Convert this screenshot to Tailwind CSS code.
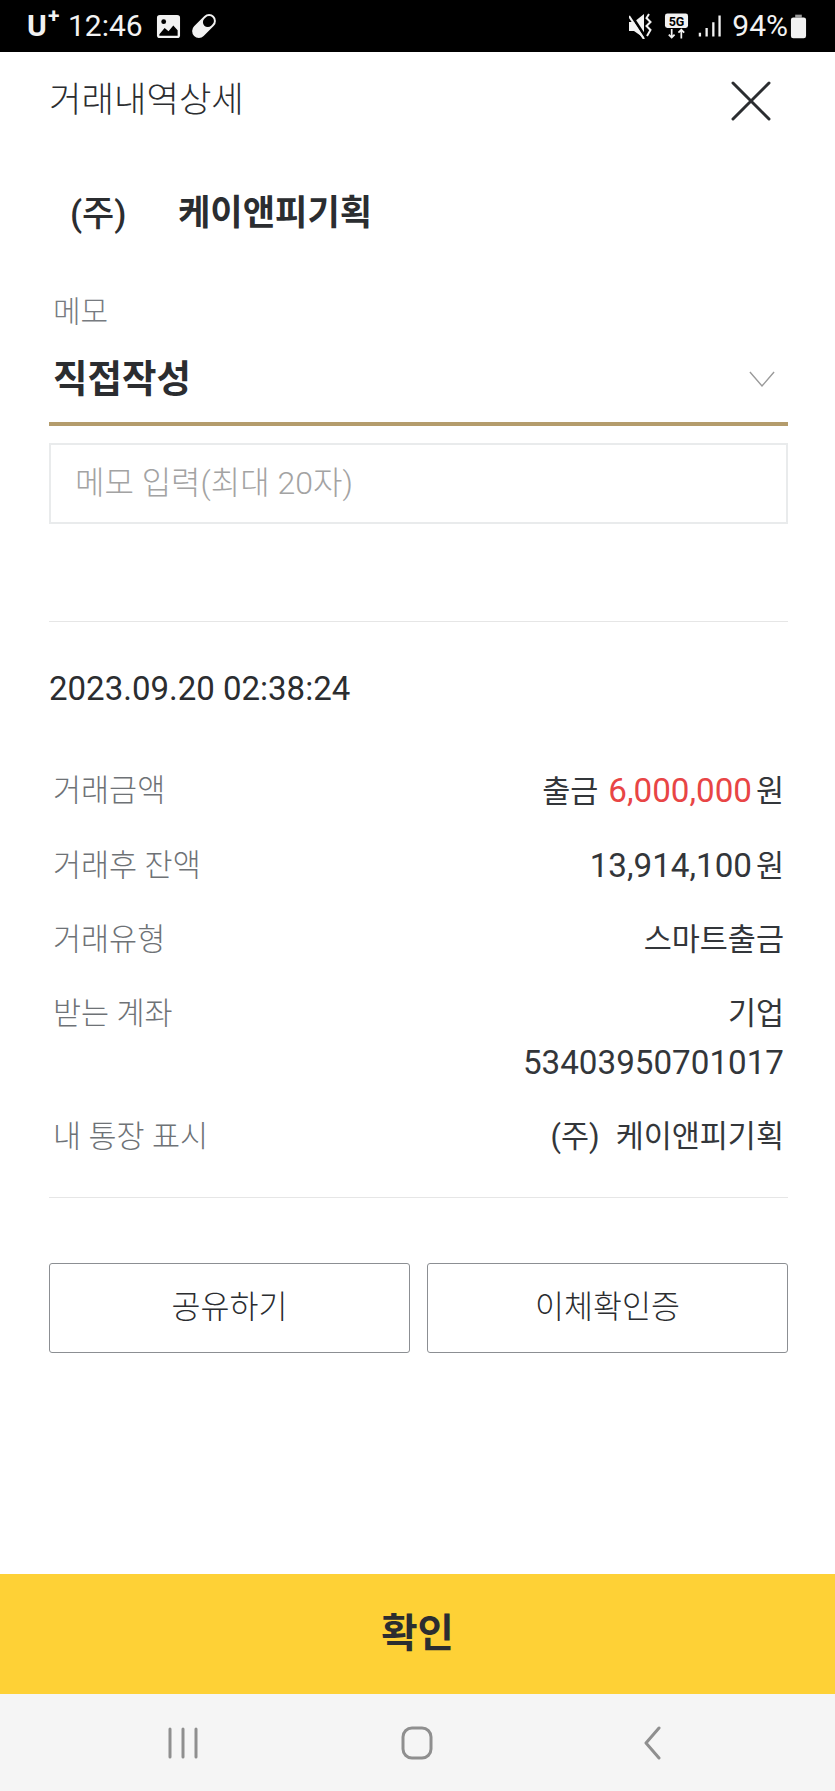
<!DOCTYPE html>
<html lang="ko">
<head>
<meta charset="utf-8">
<script src="https://cdn.jsdelivr.net/npm/@tailwindcss/browser@4"></script>
</head>
<body class="bg-white font-['Roboto','Noto_Sans_CJK_KR',sans-serif] text-[#2b2d30]">
<div class="w-[835px] h-[1791px] flex flex-col overflow-hidden">
  <div class="h-[52px] bg-black text-[#f2f2f2] flex items-center pl-[27px] pr-[27px] shrink-0">
    <span class="text-[30px] font-bold leading-none relative w-[31px]">U<span class="absolute left-[21px] -top-[5px] text-[21px]">+</span></span>
    <span class="ml-[10px] text-[30px] leading-none w-[76px]">12:46</span>
    <svg class="ml-[12px]" width="25" height="25" viewBox="0 0 26 26"><rect x="1" y="1" width="24" height="24" rx="3" fill="#f2f2f2"/><path d="M3.500 21 9 14.500l4 3.500 5-6 4.500 5V22.500H3.500z" fill="#000"/><circle cx="8" cy="8" r="2.500" fill="#000"/></svg>
    <svg class="ml-[9px]" width="28" height="28" viewBox="0 0 29 28"><g transform="rotate(-45 14.500 14)"><rect x="0" y="7" width="29" height="14" rx="7" fill="#f2f2f2"/><rect x="15" y="9" width="12" height="10" rx="5" fill="#000"/></g></svg>
    <div class="ml-auto flex items-center">
      <svg width="24" height="26" viewBox="0 0 24 26"><path d="M0 9h5l10-8v24L5 18H0z" fill="#f2f2f2"/><path d="M2 2 17 25" stroke="#000" stroke-width="3"/><path d="M0 3 15 26" stroke="#f2f2f2" stroke-width="2.200"/><path d="M20 1l-2.500 4 4 4-4 4 4 4-3.500 6" stroke="#f2f2f2" stroke-width="2" fill="none"/></svg>
      <svg class="ml-[11px]" width="25" height="28" viewBox="0 0 26 28"><rect x="1" y="1" width="24" height="15" rx="2.500" fill="#f2f2f2"/><text x="13" y="13.500" text-anchor="middle" font-family="Roboto" font-weight="700" font-size="13" fill="#000">5G</text><path d="M8 17v9m-3-3 3 3 3-3M18 27v-9m-3 3 3-3 3 3" stroke="#f2f2f2" stroke-width="1.800" fill="none"/></svg>
      <svg class="ml-[9px]" width="23" height="24" viewBox="0 0 24 24"><path d="M2 19v4M9 14v9M16 8v15M22.500 1v22" stroke="#f2f2f2" stroke-width="2.400"/></svg>
      <span class="ml-[11px] text-[30px] leading-none">94%</span>
      <svg class="ml-[2px] mr-[1px]" width="17" height="26" viewBox="0 0 18 26"><path d="M5.500 1h7v3h-7z" fill="#9a9a9a"/><rect x="1" y="4" width="16" height="22" rx="2.500" fill="#f2f2f2"/></svg>
    </div>
  </div>

  <div class="flex-1 flex flex-col pl-[49px] pr-[47px]">
    <div class="flex items-center justify-between h-[96px] pt-[2px] shrink-0">
      <h1 class="text-[35.3px] font-light leading-none">거래내역상세</h1>
      <svg class="mr-[17px]" width="40" height="40" viewBox="0 0 40 40"><path d="M2 2 38 38M38 2 2 38" stroke="#2b2d30" stroke-width="3" stroke-linecap="round"/></svg>
    </div>
    <div class="flex items-center pl-[21px] mt-[33px] h-[66px] shrink-0">
      <span class="text-[35px] font-medium leading-none w-[108px]">(주)</span>
      <span class="text-[35.2px] font-bold leading-none">케이앤피기획</span>
    </div>

    <div class="mt-[45px] pl-[4px] text-[30px] font-light leading-none text-[#777b80] h-[40px] flex items-center">메모</div>
    <div class="h-[88px] mt-[6px] pl-[4px] pr-[13px] flex items-center justify-between border-b-4 border-[#b49c6c] shrink-0">
      <span class="text-[37.5px] font-bold leading-none">직접작성</span>
      <svg class="mb-[3px]" width="26" height="16" viewBox="0 0 28 17"><path d="M1 1 14 16 27 1" stroke="#9a9a9a" stroke-width="1.500" fill="none"/></svg>
    </div>
    <div class="mt-[17px] h-[81px] border-2 border-[#e9ebec] flex items-center pl-[24px] pb-[2px] text-[32px] font-light text-[#a3a3a3] leading-none shrink-0">메모 입력(최대 20자)</div>

    <div class="mt-[97px] border-t border-[#e6e6e6] pt-[46px] text-[33px] leading-[42px]">2023.09.20 02:38:24</div>

    <div class="mt-[59px] flex flex-col pl-[4px] pr-[4px] text-[30.500px] text-[#33363a]">
      <div class="flex justify-between items-center h-[44px]"><span class="font-light text-[#6e7276]">거래금액</span><span>출금<span class="ml-[10px] text-[33.2px] text-[#e84545]">6,000,000</span><span class="ml-[4px]">원</span></span></div>
      <div class="flex justify-between items-center h-[44px] mt-[31px]"><span class="font-light text-[#6e7276]">거래후 잔액</span><span><span class="text-[33.2px]">13,914,100</span><span class="ml-[4px]">원</span></span></div>
      <div class="flex justify-between items-center h-[44px] mt-[30px]"><span class="font-light text-[#6e7276]">거래유형</span><span>스마트출금</span></div>
      <div class="flex justify-between items-start mt-[27px]"><span class="font-light text-[#6e7276] leading-[49px]">받는 계좌</span><span class="text-right leading-[49px]">기업<br><span class="text-[33.2px]">53403950701017</span></span></div>
      <div class="flex justify-between items-center h-[44px] mt-[27px]"><span class="font-light text-[#6e7276]">내 통장 표시</span><span>(주)<span class="ml-[16px]">케이앤피기획</span></span></div>
    </div>

    <div class="mt-[38px] border-t border-[#e6e6e6]"></div>

    <div class="mt-[65px] grid grid-cols-2 gap-x-[17px]">
      <div class="h-[90px] border border-[#8c8f93] rounded-[3px] flex items-center justify-center text-[31.5px] font-light">공유하기</div>
      <div class="h-[90px] border border-[#8c8f93] rounded-[3px] flex items-center justify-center text-[31.5px] font-light">이체확인증</div>
    </div>
  </div>

  <div class="h-[120px] bg-[#fed136] flex items-center justify-center text-[39.5px] font-bold shrink-0">확인</div>
  <div class="h-[97px] bg-[#f5f5f5] flex items-center pl-[168px] shrink-0">
    <svg width="30" height="32" viewBox="0 0 30 32"><path d="M2 2v28M15 2v28M28 2v28" stroke="#8f8f8f" stroke-width="3" stroke-linecap="round"/></svg>
    <svg class="ml-[203px]" width="32" height="34" viewBox="0 0 32 34"><rect x="2" y="2" width="28" height="30" rx="9" fill="none" stroke="#8f8f8f" stroke-width="3"/></svg>
    <svg class="ml-[210px]" width="19" height="34" viewBox="0 0 19 34"><path d="M16 2 3 17l13 15" fill="none" stroke="#8f8f8f" stroke-width="3" stroke-linecap="round" stroke-linejoin="round"/></svg>
  </div>
</div>
</body>
</html>
